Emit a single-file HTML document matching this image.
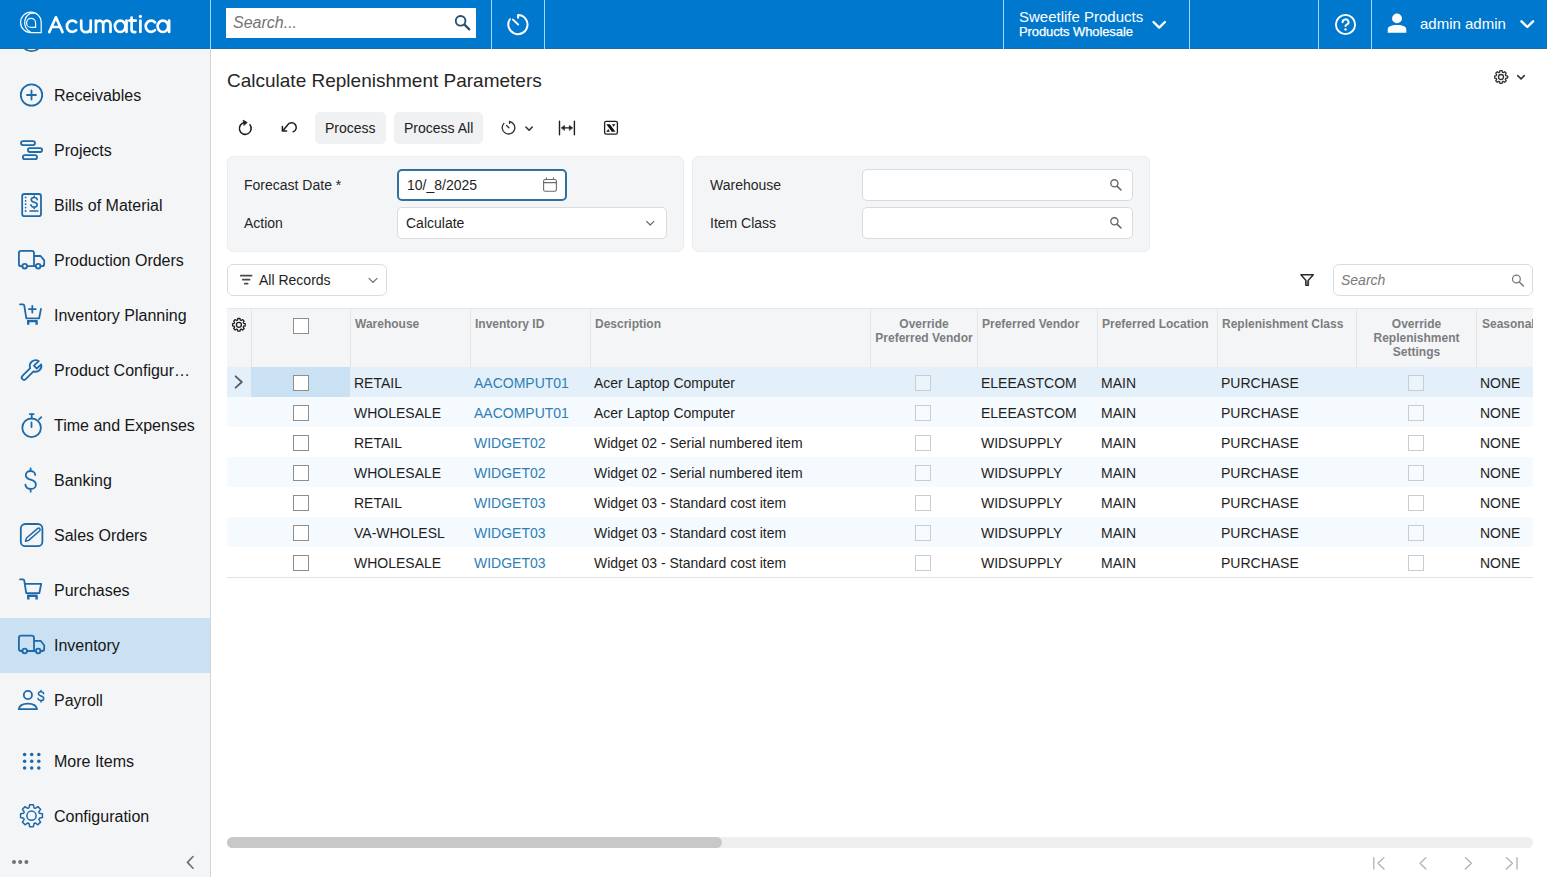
<!DOCTYPE html>
<html><head><meta charset="utf-8">
<style>
*{box-sizing:border-box;margin:0;padding:0}
html,body{width:1547px;height:877px;overflow:hidden;background:#fff;font-family:"Liberation Sans",sans-serif;color:#212121}
.a{position:absolute}
.t{position:absolute;white-space:nowrap;line-height:1}
#hdr{position:absolute;left:0;top:0;width:1547px;height:49px;background:#0078cd;border-bottom:1px solid #1c6ca6}
.vd{position:absolute;top:0;width:1px;height:49px;background:#9fd8ff}
#side{position:absolute;left:0;top:49px;width:211px;height:828px;background:#f4f5f7;border-right:1px solid #d3d5d8}
.sl{position:absolute;left:54px;font-size:16px;color:#161616;white-space:nowrap;line-height:1}
.btn{position:absolute;top:112px;height:32px;background:#f0f1f3;border-radius:5px}
.panel{position:absolute;top:156px;height:96px;background:#f4f5f7;border:1px solid #ebecee;border-radius:6px}
.lbl{position:absolute;font-size:14px;color:#262626;white-space:nowrap;line-height:1}
.inp{position:absolute;height:32px;background:#fff;border:1px solid #d9dbde;border-radius:5px}
.hd{position:absolute;font-size:12px;font-weight:bold;color:#7b7d80;white-space:nowrap;line-height:14px}
.cd{position:absolute;font-size:14px;color:#1e1e1e;white-space:nowrap;line-height:1}
.lk{color:#2f7fb5}
.cb{position:absolute;width:16px;height:16px;background:#fff;border:1.5px solid #8e8e8e}
.cbd{position:absolute;width:16px;height:16px;background:rgba(255,255,255,0.25);border:1px solid #c9ccd0}
</style></head>
<body>
<!-- HEADER -->
<div id="hdr">
  
  <div class="vd" style="left:210px"></div>
  <div class="a" style="left:226px;top:8px;width:250px;height:30px;background:#fff"></div>
  <div class="t" style="left:233px;top:15px;font-size:16px;font-style:italic;color:#737373">Search...</div>
  <div class="vd" style="left:491px"></div>
  <div class="vd" style="left:544px"></div>
  <div class="vd" style="left:1003px"></div>
  <div class="t" style="left:1019px;top:9px;font-size:15px;color:#fff">Sweetlife Products</div>
  <div class="t" style="left:1019px;top:25px;font-size:13px;color:#fff;-webkit-text-stroke:0.25px #fff;letter-spacing:-0.1px">Products Wholesale</div>
  <div class="vd" style="left:1189px"></div>
  <div class="vd" style="left:1318px"></div>
  <div class="vd" style="left:1371px"></div>
  <div class="t" style="left:1420px;top:16px;font-size:15px;color:#fff">admin admin</div>
  <svg class="a" style="left:0;top:0" width="1547" height="49" viewBox="0 0 1547 49" fill="none">
    <!-- search icon -->
    <circle cx="460.6" cy="20.8" r="4.85" stroke="#25506f" stroke-width="1.9"/>
    <path d="M464.7 24.9 L469.3 29.4" stroke="#25506f" stroke-width="2.2" stroke-linecap="round"/>
    <!-- history icon -->
    <path d="M509.9 19.2 A9.6 9.6 0 1 0 518.1 14.9" stroke="#fff" stroke-width="2" stroke-linecap="round"/>
    <path d="M518.1 14.9 v3.6" stroke="#fff" stroke-width="2" stroke-linecap="butt"/>
    <path d="M512.9 19.6 L518.2 24.5" stroke="#fff" stroke-width="1.9" stroke-linecap="round"/>
    <!-- chevrons -->
    <path d="M1153.5 22 L1159.2 27.6 L1164.9 22" stroke="#fff" stroke-width="2.4" stroke-linecap="round" stroke-linejoin="round"/>
    <path d="M1521.5 21.3 L1527.3 27 L1533.1 21.3" stroke="#fff" stroke-width="2.4" stroke-linecap="round" stroke-linejoin="round"/>
    <!-- help -->
    <circle cx="1345.5" cy="24.5" r="9.6" stroke="#fff" stroke-width="1.9"/>
    <path d="M1342.6 22.2 a2.95 2.8 0 1 1 4.2 2.5 c-.9 .4 -1.3 .8 -1.3 1.3" stroke="#fff" stroke-width="2" stroke-linecap="round"/>
    <circle cx="1345.5" cy="29.4" r="1.2" fill="#fff"/>
    <!-- user -->
    <circle cx="1397" cy="18.4" r="4.9" fill="#fff"/>
    <path d="M1387.7 32.7 v-3 c0-3 3.3-4.6 9.3-4.6 s9.3 1.6 9.3 4.6 v3 z" fill="#fff"/>
    <!-- logo mark -->
    <g stroke="#fff" stroke-width="1.2">
      <path d="M41.2 22.4 V32.7 H30.9 A10.3 10.3 0 1 1 41.2 22.4 Z"/>
      <path d="M34.5 13.4 A7.8 9.4 0 0 0 30.6 31.9"/>
      <path d="M35.6 22.9 V27.4 H31.1 A4.5 4.5 0 1 1 35.6 22.9 Z"/>
    </g>
    <g stroke="#fff" stroke-width="2.7" stroke-linecap="round" stroke-linejoin="round">
      <path d="M49.3 32 L55.9 17.3 L62.5 32 M51.7 27 H60.1"/>
      <path d="M76.2 22.3 A5.4 5.7 0 1 0 76.2 30.2"/>
      <path d="M81.2 20.6 V27.3 A4.75 4.9 0 0 0 90.7 27.3 M90.7 20.6 V32"/>
      <path d="M95.9 32 V20.6 M95.9 24.4 A3.65 3.8 0 0 1 103.2 24.4 V32 M103.2 24.4 A3.65 3.8 0 0 1 110.5 24.4 V32"/>
      <ellipse cx="120.2" cy="26.3" rx="5.3" ry="5.7"/>
      <path d="M126.5 20.6 V32"/>
      <path d="M131.6 17.5 V29.5 A2.6 2.6 0 0 0 134.2 32.1 H135.3 M129.3 20.6 H135.8"/>
      <path d="M140.4 20.6 V32"/>
      <path d="M155 22.3 A5.4 5.7 0 1 0 155 30.2"/>
      <ellipse cx="162.9" cy="26.3" rx="5.3" ry="5.7"/>
      <path d="M169.1 20.6 V32"/>
    </g>
    <circle cx="140.4" cy="16.4" r="1.65" fill="#fff"/>
  </svg>
</div>

<!-- SIDEBAR -->
<div id="side"></div>
<div class="a" style="left:0;top:618px;width:210px;height:55px;background:#c9e1f3"></div>
<div class="sl" style="top:88px">Receivables</div>
<div class="sl" style="top:143px">Projects</div>
<div class="sl" style="top:198px">Bills of Material</div>
<div class="sl" style="top:253px">Production Orders</div>
<div class="sl" style="top:308px">Inventory Planning</div>
<div class="sl" style="top:363px">Product Configur…</div>
<div class="sl" style="top:418px">Time and Expenses</div>
<div class="sl" style="top:473px">Banking</div>
<div class="sl" style="top:528px">Sales Orders</div>
<div class="sl" style="top:583px">Purchases</div>
<div class="sl" style="top:638px">Inventory</div>
<div class="sl" style="top:693px">Payroll</div>
<div class="sl" style="top:754px">More Items</div>
<div class="sl" style="top:809px">Configuration</div>
<svg class="a" style="left:0;top:49px" width="211" height="828" viewBox="0 49 211 828" fill="none">
  <g stroke="#1e69a8" stroke-width="1.8" stroke-linecap="round" stroke-linejoin="round">
    <!-- partial top circle -->
    <circle cx="31.5" cy="40.5" r="10.7"/>
    <!-- receivables -->
    <circle cx="31.5" cy="95" r="10.7"/>
    <path d="M27 95 h9 M31.5 90.5 v9"/>
    <!-- projects -->
    <rect x="21" y="141.1" width="14" height="4" rx="2"/>
    <rect x="27.9" y="148.2" width="14.2" height="3.8" rx="1.9"/>
    <rect x="22.9" y="155.2" width="14.1" height="4" rx="2"/>
    <!-- bills -->
    <rect x="22.2" y="194" width="18.8" height="22.2" rx="2.2"/>
    <path d="M30 210.9 h8" stroke-width="1.5"/>
    <path d="M37.2 199.6 c-.2-1.3-1.3-2.1-3-2.1 c-1.8 0-3 1-3 2.3 c0 1.6 1.6 2.1 3 2.5 c1.5 .4 3 .9 3 2.5 c0 1.4-1.3 2.3-3.1 2.3 c-1.7 0-2.9-.8-3.2-2.2 M34.2 196 v1.5 M34.2 207 v1.6" stroke-width="1.6"/>
    <!-- production orders truck -->
    <path d="M22.4 266.2 h-1.2 a2.3 2.3 0 0 1 -2.3 -2.3 v-10.7 a2.3 2.3 0 0 1 2.3 -2.3 h10.5 a2.3 2.3 0 0 1 2.3 2.3 v13 M27.1 266.2 h8.7 M34 256 h6.6 l3.6 4.4 v3.5 a2.3 2.3 0 0 1 -2.3 2.3 h-1.5"/>
    <circle cx="24.7" cy="266.2" r="2.3"/>
    <circle cx="38.2" cy="266.2" r="2.3"/>
    <!-- inventory planning cart -->
    <path d="M20 304.3 h2.8 a1.5 1.5 0 0 1 1.5 1.3 l2 12.8 h12.8 l1.9 -9.6"/>
    <path d="M27 321.1 h10.6 M28.2 321.1 v3.7 M36.6 321.1 v3.7" stroke-width="2.4" stroke-linecap="butt"/>
    <path d="M28.9 309.2 h6.8 M32.3 305.8 v6.8"/>
    <!-- wrench -->
    <g transform="translate(0.3,1)"><path d="M29.9 367.1 L22.1 374.8 A2.3 2.3 0 0 0 25.4 378.1 L33.2 370.3 A5.8 5.8 0 0 0 40.9 363.4 L36.5 367.5 L33.6 364.7 L38.5 360.2 A5.8 5.8 0 0 0 29.9 367.1 Z"/></g>
    <!-- stopwatch -->
    <circle cx="31.6" cy="427.8" r="9.3"/>
    <path d="M31.7 414.3 v3.6 M29.8 414.1 h3.9 M39 419.3 l2.3 -2.1 M31.5 422.3 v4.7"/>
    <!-- banking -->
    <path d="M35.2 475 c0 -2.4 -2.2 -4 -4.7 -4 c-2.7 0 -4.7 1.8 -4.7 4.2 c0 2.7 2.3 3.7 4.9 4.5 c2.7 .8 5.2 2 5.2 5 c0 2.5 -2.4 4.3 -5.2 4.3 c-2.8 0 -5 -1.7 -5.3 -4.3 M30.6 468.3 v2.7 M30.6 489 v2.7" stroke-width="1.8"/>
    <!-- sales orders -->
    <rect x="20.8" y="524" width="21.6" height="22.2" rx="4.5"/>
    <path d="M25.5 541.3 l1 -3.3 l11.3 -9.6 a1.5 1.5 0 0 1 2 .3 a1.5 1.5 0 0 1 -.1 2 l-11 9.7 z" stroke-width="1.5"/>
    <!-- purchases cart -->
    <path d="M20 579.3 h2.8 a1.5 1.5 0 0 1 1.5 1.3 l1.9 12.6 h13.1 l1.9 -9.4 h-15.5"/>
    <path d="M27 595.7 h10.6 M28.3 595.7 v3.8 M36.6 595.7 v3.8" stroke-width="2.4" stroke-linecap="butt"/>
    <!-- inventory truck -->
    <path d="M22.4 651 h-1.2 a2.3 2.3 0 0 1 -2.3 -2.3 v-10.7 a2.3 2.3 0 0 1 2.3 -2.3 h10.5 a2.3 2.3 0 0 1 2.3 2.3 v13 M27.1 651 h8.7 M34 640.8 h6.6 l3.6 4.4 v3.5 a2.3 2.3 0 0 1 -2.3 2.3 h-1.5"/>
    <circle cx="24.7" cy="651" r="2.3"/>
    <circle cx="38.2" cy="651" r="2.3"/>
    <!-- payroll -->
    <circle cx="27.9" cy="695" r="4.1"/>
    <path d="M18.8 709.2 c.6 -3.6 4.3 -5.6 9.1 -5.6 s8.5 2 9.1 5.6 z"/>
    <g transform="translate(0,1.4)"><path d="M43.6 692.4 c-.1 -1.2 -1.2 -2 -2.6 -2 c-1.5 0 -2.6 .9 -2.6 2 c0 1.4 1.3 1.8 2.6 2.2 c1.4 .4 2.7 .9 2.7 2.4 c0 1.3 -1.2 2.2 -2.7 2.2 c-1.6 0 -2.7 -.8 -2.9 -2.1 M41 689.2 v1.2 M41 699.2 v1.4" stroke-width="1.5"/></g>
    <!-- configuration gear -->
    <path d="M29.00 807.89 L29.62 804.76 L33.38 804.76 L34.00 807.89 L35.25 808.41 L37.91 806.64 L40.56 809.29 L38.79 811.95 L39.31 813.20 L42.44 813.82 L42.44 817.58 L39.31 818.20 L38.79 819.45 L40.56 822.11 L37.91 824.76 L35.25 822.99 L34.00 823.51 L33.38 826.64 L29.62 826.64 L29.00 823.51 L27.75 822.99 L25.09 824.76 L22.44 822.11 L24.21 819.45 L23.69 818.20 L20.56 817.58 L20.56 813.82 L23.69 813.20 L24.21 811.95 L22.44 809.29 L25.09 806.64 L27.75 808.41 Z" stroke-width="1.5"/>
    <circle cx="31.5" cy="815.7" r="4.6" stroke-width="1.5"/>
  </g>
  <g fill="#1e69a8">
    <circle cx="25.6" cy="197.4" r=".9"/><circle cx="25.6" cy="200.8" r=".9"/><circle cx="25.6" cy="204.2" r=".9"/><circle cx="25.6" cy="207.6" r=".9"/><circle cx="25.6" cy="211" r=".9"/>
    <circle cx="24.6" cy="754.5" r="1.75"/><circle cx="31.7" cy="754.5" r="1.75"/><circle cx="38.8" cy="754.5" r="1.75"/>
    <circle cx="24.6" cy="761.2" r="1.75"/><circle cx="31.7" cy="761.2" r="1.75"/><circle cx="38.8" cy="761.2" r="1.75"/>
    <circle cx="24.6" cy="767.9" r="1.75"/><circle cx="31.7" cy="767.9" r="1.75"/><circle cx="38.8" cy="767.9" r="1.75"/>
  </g>
  <g fill="#6f7378">
    <circle cx="14" cy="862" r="2"/><circle cx="20.2" cy="862" r="2"/><circle cx="26.4" cy="862" r="2"/>
  </g>
  <path d="M193 856.5 L187.5 862.4 L193 868.2" stroke="#6a6e73" stroke-width="1.6" stroke-linecap="round" stroke-linejoin="round"/>
</svg>

<!-- MAIN -->
<div id="main">
  <div class="t" style="left:227px;top:71px;font-size:19px;color:#262626">Calculate Replenishment Parameters</div>
  <!-- toolbar -->
  <div class="btn" style="left:315px;width:71px"></div>
  <div class="t" style="left:325px;top:121px;font-size:14px;color:#212121">Process</div>
  <div class="btn" style="left:394px;width:89px"></div>
  <div class="t" style="left:404px;top:121px;font-size:14px;color:#212121">Process All</div>
  <!-- panels -->
  <div class="panel" style="left:227px;width:457px"></div>
  <div class="panel" style="left:692px;width:458px"></div>
  <div class="lbl" style="left:244px;top:178px">Forecast Date *</div>
  <div class="lbl" style="left:244px;top:216px">Action</div>
  <div class="inp" style="left:397px;top:169px;width:170px;border:2px solid #2f72a0"></div>
  <div class="t" style="left:407px;top:178px;font-size:14px;color:#1e1e1e">10/_8/2025</div>
  <div class="inp" style="left:397px;top:207px;width:270px"></div>
  <div class="t" style="left:406px;top:216px;font-size:14px;color:#1e1e1e">Calculate</div>
  <div class="lbl" style="left:710px;top:178px">Warehouse</div>
  <div class="lbl" style="left:710px;top:216px">Item Class</div>
  <div class="inp" style="left:862px;top:169px;width:271px"></div>
  <div class="inp" style="left:862px;top:207px;width:271px"></div>
  <!-- filter bar -->
  <div class="inp" style="left:227px;top:264px;width:160px;border-radius:6px"></div>
  <div class="t" style="left:259px;top:273px;font-size:14px;color:#1e1e1e">All Records</div>
  <div class="inp" style="left:1333px;top:264px;width:200px;border-radius:6px"></div>
  <div class="t" style="left:1341px;top:273px;font-size:14px;font-style:italic;color:#7a7a7a">Search</div>
  <!-- grid header -->
  <div class="a" style="left:227px;top:308px;width:1306px;height:59px;background:#f4f5f7;border-top:1px solid #e6e8ea"></div>
  <div class="a" style="left:251px;top:308px;width:1px;height:59px;background:#e3e5e8"></div>
  <div class="a" style="left:350px;top:308px;width:1px;height:59px;background:#e3e5e8"></div>
  <div class="a" style="left:470px;top:308px;width:1px;height:59px;background:#e3e5e8"></div>
  <div class="a" style="left:590px;top:308px;width:1px;height:59px;background:#e3e5e8"></div>
  <div class="a" style="left:870px;top:308px;width:1px;height:59px;background:#e3e5e8"></div>
  <div class="a" style="left:977px;top:308px;width:1px;height:59px;background:#e3e5e8"></div>
  <div class="a" style="left:1097px;top:308px;width:1px;height:59px;background:#e3e5e8"></div>
  <div class="a" style="left:1217px;top:308px;width:1px;height:59px;background:#e3e5e8"></div>
  <div class="a" style="left:1356px;top:308px;width:1px;height:59px;background:#e3e5e8"></div>
  <div class="a" style="left:1476px;top:308px;width:1px;height:59px;background:#e3e5e8"></div>
  <div class="cb" style="left:293px;top:318px"></div>
  <div class="hd" style="left:355px;top:317px">Warehouse</div>
  <div class="hd" style="left:475px;top:317px">Inventory ID</div>
  <div class="hd" style="left:595px;top:317px">Description</div>
  <div class="hd" style="left:871px;top:317px;width:106px;text-align:center">Override<br>Preferred Vendor</div>
  <div class="hd" style="left:982px;top:317px">Preferred Vendor</div>
  <div class="hd" style="left:1102px;top:317px">Preferred Location</div>
  <div class="hd" style="left:1222px;top:317px">Replenishment Class</div>
  <div class="hd" style="left:1357px;top:317px;width:119px;text-align:center">Override<br>Replenishment<br>Settings</div>
  <div class="hd" style="left:1482px;top:317px;width:51px;overflow:hidden">Seasonal</div>
  <!-- rows -->
  <div class="a" style="left:227px;top:367px;width:1306px;height:31px;background:#e3f0fa;border-bottom:1px solid #dde6ed"></div>
  <div class="a" style="left:251px;top:367px;width:99px;height:30px;background:#c9e1f3"></div>
  <div class="cb" style="left:293px;top:375px"></div>
  <div class="cd" style="left:354px;top:376px">RETAIL</div>
  <div class="cd lk" style="left:474px;top:376px">AACOMPUT01</div>
  <div class="cd" style="left:594px;top:376px">Acer Laptop Computer</div>
  <div class="cbd" style="left:915px;top:375px"></div>
  <div class="cd" style="left:981px;top:376px">ELEEASTCOM</div>
  <div class="cd" style="left:1101px;top:376px">MAIN</div>
  <div class="cd" style="left:1221px;top:376px">PURCHASE</div>
  <div class="cbd" style="left:1408px;top:375px"></div>
  <div class="cd" style="left:1480px;top:376px">NONE</div>
  <div class="a" style="left:227px;top:397px;width:1306px;height:31px;background:#f5fafe;border-bottom:1px solid #dde6ed"></div>
  <div class="cb" style="left:293px;top:405px"></div>
  <div class="cd" style="left:354px;top:406px">WHOLESALE</div>
  <div class="cd lk" style="left:474px;top:406px">AACOMPUT01</div>
  <div class="cd" style="left:594px;top:406px">Acer Laptop Computer</div>
  <div class="cbd" style="left:915px;top:405px"></div>
  <div class="cd" style="left:981px;top:406px">ELEEASTCOM</div>
  <div class="cd" style="left:1101px;top:406px">MAIN</div>
  <div class="cd" style="left:1221px;top:406px">PURCHASE</div>
  <div class="cbd" style="left:1408px;top:405px"></div>
  <div class="cd" style="left:1480px;top:406px">NONE</div>
  <div class="a" style="left:227px;top:427px;width:1306px;height:31px;background:#ffffff;border-bottom:1px solid #dde6ed"></div>
  <div class="cb" style="left:293px;top:435px"></div>
  <div class="cd" style="left:354px;top:436px">RETAIL</div>
  <div class="cd lk" style="left:474px;top:436px">WIDGET02</div>
  <div class="cd" style="left:594px;top:436px">Widget 02 - Serial numbered item</div>
  <div class="cbd" style="left:915px;top:435px"></div>
  <div class="cd" style="left:981px;top:436px">WIDSUPPLY</div>
  <div class="cd" style="left:1101px;top:436px">MAIN</div>
  <div class="cd" style="left:1221px;top:436px">PURCHASE</div>
  <div class="cbd" style="left:1408px;top:435px"></div>
  <div class="cd" style="left:1480px;top:436px">NONE</div>
  <div class="a" style="left:227px;top:457px;width:1306px;height:31px;background:#f5fafe;border-bottom:1px solid #dde6ed"></div>
  <div class="cb" style="left:293px;top:465px"></div>
  <div class="cd" style="left:354px;top:466px">WHOLESALE</div>
  <div class="cd lk" style="left:474px;top:466px">WIDGET02</div>
  <div class="cd" style="left:594px;top:466px">Widget 02 - Serial numbered item</div>
  <div class="cbd" style="left:915px;top:465px"></div>
  <div class="cd" style="left:981px;top:466px">WIDSUPPLY</div>
  <div class="cd" style="left:1101px;top:466px">MAIN</div>
  <div class="cd" style="left:1221px;top:466px">PURCHASE</div>
  <div class="cbd" style="left:1408px;top:465px"></div>
  <div class="cd" style="left:1480px;top:466px">NONE</div>
  <div class="a" style="left:227px;top:487px;width:1306px;height:31px;background:#ffffff;border-bottom:1px solid #dde6ed"></div>
  <div class="cb" style="left:293px;top:495px"></div>
  <div class="cd" style="left:354px;top:496px">RETAIL</div>
  <div class="cd lk" style="left:474px;top:496px">WIDGET03</div>
  <div class="cd" style="left:594px;top:496px">Widget 03 - Standard cost item</div>
  <div class="cbd" style="left:915px;top:495px"></div>
  <div class="cd" style="left:981px;top:496px">WIDSUPPLY</div>
  <div class="cd" style="left:1101px;top:496px">MAIN</div>
  <div class="cd" style="left:1221px;top:496px">PURCHASE</div>
  <div class="cbd" style="left:1408px;top:495px"></div>
  <div class="cd" style="left:1480px;top:496px">NONE</div>
  <div class="a" style="left:227px;top:517px;width:1306px;height:31px;background:#f5fafe;border-bottom:1px solid #dde6ed"></div>
  <div class="cb" style="left:293px;top:525px"></div>
  <div class="cd" style="left:354px;top:526px">VA-WHOLESL</div>
  <div class="cd lk" style="left:474px;top:526px">WIDGET03</div>
  <div class="cd" style="left:594px;top:526px">Widget 03 - Standard cost item</div>
  <div class="cbd" style="left:915px;top:525px"></div>
  <div class="cd" style="left:981px;top:526px">WIDSUPPLY</div>
  <div class="cd" style="left:1101px;top:526px">MAIN</div>
  <div class="cd" style="left:1221px;top:526px">PURCHASE</div>
  <div class="cbd" style="left:1408px;top:525px"></div>
  <div class="cd" style="left:1480px;top:526px">NONE</div>
  <div class="a" style="left:227px;top:547px;width:1306px;height:31px;background:#ffffff;border-bottom:1px solid #dde6ed"></div>
  <div class="cb" style="left:293px;top:555px"></div>
  <div class="cd" style="left:354px;top:556px">WHOLESALE</div>
  <div class="cd lk" style="left:474px;top:556px">WIDGET03</div>
  <div class="cd" style="left:594px;top:556px">Widget 03 - Standard cost item</div>
  <div class="cbd" style="left:915px;top:555px"></div>
  <div class="cd" style="left:981px;top:556px">WIDSUPPLY</div>
  <div class="cd" style="left:1101px;top:556px">MAIN</div>
  <div class="cd" style="left:1221px;top:556px">PURCHASE</div>
  <div class="cbd" style="left:1408px;top:555px"></div>
  <div class="cd" style="left:1480px;top:556px">NONE</div>
  <!-- scrollbar -->
  <div class="a" style="left:227px;top:837px;width:1306px;height:11px;background:#efefef;border-radius:6px"></div>
  <div class="a" style="left:227px;top:837px;width:495px;height:11px;background:#c8c8c8;border-radius:6px"></div>
  <svg class="a" style="left:0;top:0" width="1547" height="877" viewBox="0 0 1547 877" fill="none">
    <g stroke="#1f1f1f" stroke-width="1.5" stroke-linecap="round" stroke-linejoin="round">
      <!-- refresh -->
      <path d="M244.6 122.6 A5.9 5.9 0 1 0 249.9 124.8" stroke-width="1.55"/>
      <path d="M243.5 120.4 L247.1 122.4 L244.3 125.2 Z" fill="#1f1f1f" stroke-width="0.9"/>
      <!-- undo -->
      <path d="M293.2 131.8 A4.7 4.7 0 1 0 287.6 124.9 L283.2 130.2" stroke-width="1.55"/>
      <path d="M282.4 126.6 V130.9 H286.6" stroke-width="1.55"/>
      <!-- history -->
      <path d="M503.9 123.4 A6.3 6.3 0 1 0 509.6 121.5" stroke="#333" stroke-width="1.35"/>
      <path d="M509.6 121.5 v1.9 M506.6 125.5 L508.9 127.8" stroke="#333" stroke-width="1.35"/>
      <path d="M525.9 127 L529.1 130.2 L532.3 127" stroke="#333" stroke-width="1.6"/>
      <!-- fit -->
      <path d="M559.5 121.3 v13.4 M574.4 121.3 v13.4" stroke-width="1.4"/>
      <path d="M563 127.8 h8" stroke-width="1.2"/>
      <path d="M561.3 127.8 L564.6 125.4 V130.2 Z M572.6 127.8 L569.3 125.4 V130.2 Z" fill="#1f1f1f" stroke-width="0.5"/>
      <!-- excel -->
      <rect x="604.6" y="121.4" width="12.8" height="12.8" rx="1.6" stroke-width="1.3"/>
      <!-- calendar -->
      <rect x="543.6" y="179.5" width="12.8" height="11.8" rx="1.6" stroke="#6b6b6b" stroke-width="1.1"/>
      <path d="M543.8 182.6 h12.4 M546.4 177.8 v1.7 M553.5 177.8 v1.7" stroke="#6b6b6b" stroke-width="1.1"/>
      <!-- action chevron -->
      <path d="M646.6 221.4 L650.2 225 L653.8 221.4" stroke="#6b6b6b" stroke-width="1.2"/>
      <!-- search lookups -->
      <circle cx="1114.4" cy="183.3" r="3.6" stroke="#666" stroke-width="1.35"/>
      <path d="M1117 186.1 L1121 190" stroke="#666" stroke-width="1.6"/>
      <circle cx="1114.4" cy="221.3" r="3.6" stroke="#666" stroke-width="1.35"/>
      <path d="M1117 224.1 L1121 228" stroke="#666" stroke-width="1.6"/>
      <!-- filter lines -->
      <path d="M240.8 275.7 h10.8 M242.8 279.7 h6.8 M244.8 283.7 h2.8" stroke="#4a4a4a" stroke-width="1.7"/>
      <path d="M369 278.3 L373 282.3 L377 278.3" stroke="#6b6b6b" stroke-width="1.2"/>
      <!-- funnel -->
      <path d="M1300.9 274.7 h12.4 l-4.9 5.5 v5 h-2.6 v-5 z" stroke="#2a2a2a" stroke-width="1.4"/><path d="M1306.4 280.5 h2.2 v4.6 h-2.2 z" fill="#555" stroke="none"/>
      <!-- grid search -->
      <circle cx="1516.4" cy="279" r="3.9" stroke="#7a7a7a" stroke-width="1.3"/>
      <path d="M1519.3 282 L1523.4 286" stroke="#7a7a7a" stroke-width="1.5"/>
      <!-- row chevron -->
      <path d="M235.6 376.3 L241.8 382 L235.6 387.7" stroke="#555a60" stroke-width="1.8"/>
      <!-- page settings gear (top right) -->
      <path d="M1508 77 a7 7 0 0 0 0 0" stroke="#333"/>
      <path d="M1517.7 75.6 L1521 78.9 L1524.3 75.6" stroke="#333" stroke-width="1.5"/>
      <!-- pager -->
      <path d="M1373.8 857.6 v11.4 M1384 857.6 L1378 863.3 L1384 869 M1426 857.6 L1420 863.3 L1426 869 M1465.4 857.6 L1471.4 863.3 L1465.4 869 M1506.4 857.6 L1512.4 863.3 L1506.4 869 M1517 857.6 v11.4" stroke="#b0b0b0" stroke-width="1.3"/>
    </g>
    <path d="M606.3 124.2 H609.9 L615.4 131.7 H611.8 Z M611.9 124.2 H615.4 L613.5 126.8 Z M606.3 131.7 H609.8 L608.3 128.9 Z" fill="#111"/>
    <path d="M237.45 320.12 L237.82 318.49 L239.98 318.49 L240.35 320.12 L241.19 320.47 L242.59 319.57 L244.13 321.11 L243.23 322.51 L243.58 323.35 L245.21 323.72 L245.21 325.88 L243.58 326.25 L243.23 327.09 L244.13 328.49 L242.59 330.03 L241.19 329.13 L240.35 329.48 L239.98 331.11 L237.82 331.11 L237.45 329.48 L236.61 329.13 L235.21 330.03 L233.67 328.49 L234.57 327.09 L234.22 326.25 L232.59 325.88 L232.59 323.72 L234.22 323.35 L234.57 322.51 L233.67 321.11 L235.21 319.57 L236.61 320.47 Z" stroke="#1f1f1f" stroke-width="1.3" stroke-linejoin="round"/>
    <circle cx="238.9" cy="324.8" r="2.5" stroke="#1f1f1f" stroke-width="1.3"/>
    <path d="M1499.55 72.32 L1499.92 70.69 L1502.08 70.69 L1502.45 72.32 L1503.29 72.67 L1504.69 71.77 L1506.23 73.31 L1505.33 74.71 L1505.68 75.55 L1507.31 75.92 L1507.31 78.08 L1505.68 78.45 L1505.33 79.29 L1506.23 80.69 L1504.69 82.23 L1503.29 81.33 L1502.45 81.68 L1502.08 83.31 L1499.92 83.31 L1499.55 81.68 L1498.71 81.33 L1497.31 82.23 L1495.77 80.69 L1496.67 79.29 L1496.32 78.45 L1494.69 78.08 L1494.69 75.92 L1496.32 75.55 L1496.67 74.71 L1495.77 73.31 L1497.31 71.77 L1498.71 72.67 Z" stroke="#333" stroke-width="1.3" stroke-linejoin="round"/>
    <circle cx="1501" cy="77" r="2.5" stroke="#333" stroke-width="1.3"/>

  </svg>
</div>
</body></html>
